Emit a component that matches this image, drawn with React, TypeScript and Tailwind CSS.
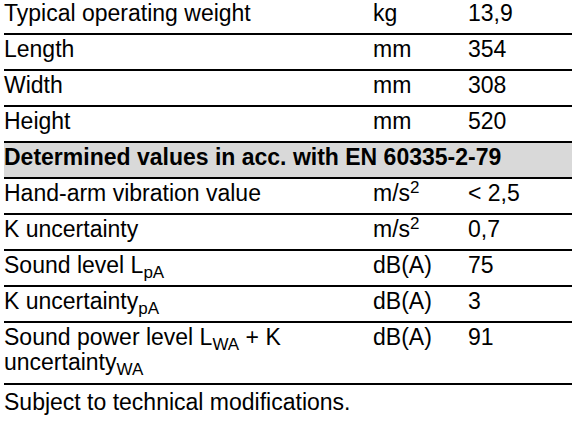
import React from "react";

const Sup = ({ children }: { children: React.ReactNode }) => (
  <span className="text-[17px] leading-[0] align-[8px]">{children}</span>
);
const Sub = ({ children }: { children: React.ReactNode }) => (
  <span className="text-[17px] leading-[0] align-[-5px]">{children}</span>
);

type Row = { label: React.ReactNode; unit: React.ReactNode; value: string; tall?: boolean };

const top: Row[] = [
  { label: "Length", unit: "mm", value: "354" },
  { label: "Width", unit: "mm", value: "308" },
  { label: "Height", unit: "mm", value: "520" },
];

const det: Row[] = [
  { label: "Hand-arm vibration value", unit: <>m/s<Sup>2</Sup></>, value: "< 2,5" },
  { label: "K uncertainty", unit: <>m/s<Sup>2</Sup></>, value: "0,7" },
  { label: <>Sound level L<Sub>pA</Sub></>, unit: "dB(A)", value: "75" },
  { label: <>K uncertainty<Sub>pA</Sub></>, unit: "dB(A)", value: "3" },
  {
    label: (
      <>
        Sound power level L<Sub>WA</Sub> + K
        <br />
        uncertainty<Sub>WA</Sub>
      </>
    ),
    unit: "dB(A)",
    value: "91",
    tall: true,
  },
];

function DataRow({ r }: { r: Row }) {
  return (
    <div
      className={`grid grid-cols-[369px_95px_1fr] border-t-2 border-black pt-[2px] ${
        r.tall ? "h-[62px]" : "h-[36px]"
      }`}
    >
      <div className="whitespace-nowrap">{r.label}</div>
      <div className="whitespace-nowrap">{r.unit}</div>
      <div className="whitespace-nowrap">{r.value}</div>
    </div>
  );
}

export default function App() {
  return (
    <div
      className="w-[575px] h-[421px] bg-white text-black overflow-hidden pl-[4px] pr-[3px]"
      style={{ fontFamily: '"Liberation Sans", Arial, sans-serif' }}
    >
      <div className="text-[23px] leading-[25px]">
        <div className="grid grid-cols-[369px_95px_1fr] h-[33px] pt-[1px]">
          <div className="whitespace-nowrap">Typical operating weight</div>
          <div>kg</div>
          <div>13,9</div>
        </div>
        {top.map((r, i) => (
          <DataRow key={i} r={r} />
        ))}
        <div className="border-t-2 border-black h-[36px] bg-[#d9d9d9] pt-[2px] font-bold whitespace-nowrap">
          Determined values in acc. with EN 60335-2-79
        </div>
        {det.map((r, i) => (
          <DataRow key={i} r={r} />
        ))}
        <div className="border-t-2 border-black pt-[5px] whitespace-nowrap">
          Subject to technical modifications.
        </div>
      </div>
    </div>
  );
}
